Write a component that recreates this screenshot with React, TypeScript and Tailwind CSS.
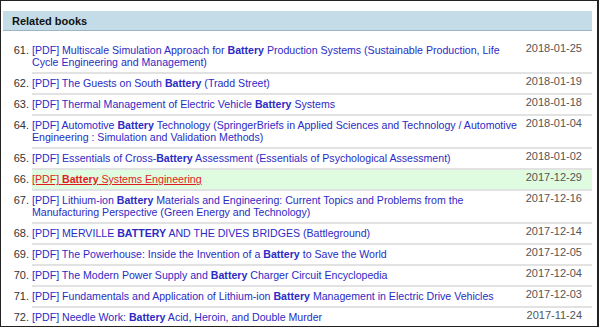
import React from "react";

type Book = {
  n: number;
  parts: (string | { b: string })[];
  date: string;
  active?: boolean;
};

const books: Book[] = [
  {
    n: 61,
    parts: [
      "[PDF] Multiscale Simulation Approach for ",
      { b: "Battery" },
      " Production Systems (Sustainable Production, Life Cycle Engineering and Management)",
    ],
    date: "2018-01-25",
  },
  { n: 62, parts: ["[PDF] The Guests on South ", { b: "Battery" }, " (Tradd Street)"], date: "2018-01-19" },
  { n: 63, parts: ["[PDF] Thermal Management of Electric Vehicle ", { b: "Battery" }, " Systems"], date: "2018-01-18" },
  {
    n: 64,
    parts: [
      "[PDF] Automotive ",
      { b: "Battery" },
      " Technology (SpringerBriefs in Applied Sciences and Technology / Automotive Engineering : Simulation and Validation Methods)",
    ],
    date: "2018-01-04",
  },
  {
    n: 65,
    parts: ["[PDF] Essentials of Cross-", { b: "Battery" }, " Assessment (Essentials of Psychological Assessment)"],
    date: "2018-01-02",
  },
  { n: 66, parts: ["[PDF] ", { b: "Battery" }, " Systems Engineering"], date: "2017-12-29", active: true },
  {
    n: 67,
    parts: [
      "[PDF] Lithium-ion ",
      { b: "Battery" },
      " Materials and Engineering: Current Topics and Problems from the Manufacturing Perspective (Green Energy and Technology)",
    ],
    date: "2017-12-16",
  },
  { n: 68, parts: ["[PDF] MERVILLE ", { b: "BATTERY" }, " AND THE DIVES BRIDGES (Battleground)"], date: "2017-12-14" },
  {
    n: 69,
    parts: ["[PDF] The Powerhouse: Inside the Invention of a ", { b: "Battery" }, " to Save the World"],
    date: "2017-12-05",
  },
  {
    n: 70,
    parts: ["[PDF] The Modern Power Supply and ", { b: "Battery" }, " Charger Circuit Encyclopedia"],
    date: "2017-12-04",
  },
  {
    n: 71,
    parts: [
      "[PDF] Fundamentals and Application of Lithium-ion ",
      { b: "Battery" },
      " Management in Electric Drive Vehicles",
    ],
    date: "2017-12-03",
  },
  {
    n: 72,
    parts: ["[PDF] Needle Work: ", { b: "Battery" }, " Acid, Heroin, and Double Murder"],
    date: "2017-11-24",
  },
];

export default function App() {
  return (
    <div className="h-[328px] w-[600px] bg-white font-['Liberation_Sans',Arial,sans-serif] text-[10.6px]">
      <div className="h-[327px] w-[599px] overflow-hidden border-t border-b border-l border-r-2 border-[#222] bg-white">
        <div className="ml-[2px] mr-[5px] mt-[10px] border-b border-[#9ab6c6] bg-[#c3dce8] pl-[9px] pt-[4px] pb-[3px] text-[11px] font-bold leading-[12px] text-[#111]">
          Related books
        </div>
        <ol className="mr-[5px] mt-[10px]">
          {books.map((bk) => (
            <li key={bk.n} className="flex">
              <span className="w-[31px] shrink-0 pr-[3px] pt-[3px] text-right text-[11px] leading-[12px] text-[#333]">
                {bk.n}.
              </span>
              <div
                className={
                  "flex flex-1 border-b-2 border-[#e2e2e2] pt-[3px] pb-[4px] " +
                  (bk.active ? "bg-[#e0fce0]" : "")
                }
              >
                <a
                  href="#"
                  className={
                    "min-w-0 flex-1 leading-[12px] " +
                    (bk.active ? "text-[#e21b1b] underline" : "text-[#2b2bc4]")
                  }
                >
                  {bk.parts.map((p, i) =>
                    typeof p === "string" ? (
                      <span key={i}>{p}</span>
                    ) : (
                      <b key={i} className="font-bold">
                        {p.b}
                      </b>
                    )
                  )}
                </a>
                <span className="-mt-[2px] flex w-[68px] shrink-0 justify-end whitespace-nowrap pr-[10px] text-[11px] leading-[12px] text-[#555]">
                  {bk.date}
                </span>
              </div>
            </li>
          ))}
        </ol>
      </div>
    </div>
  );
}
